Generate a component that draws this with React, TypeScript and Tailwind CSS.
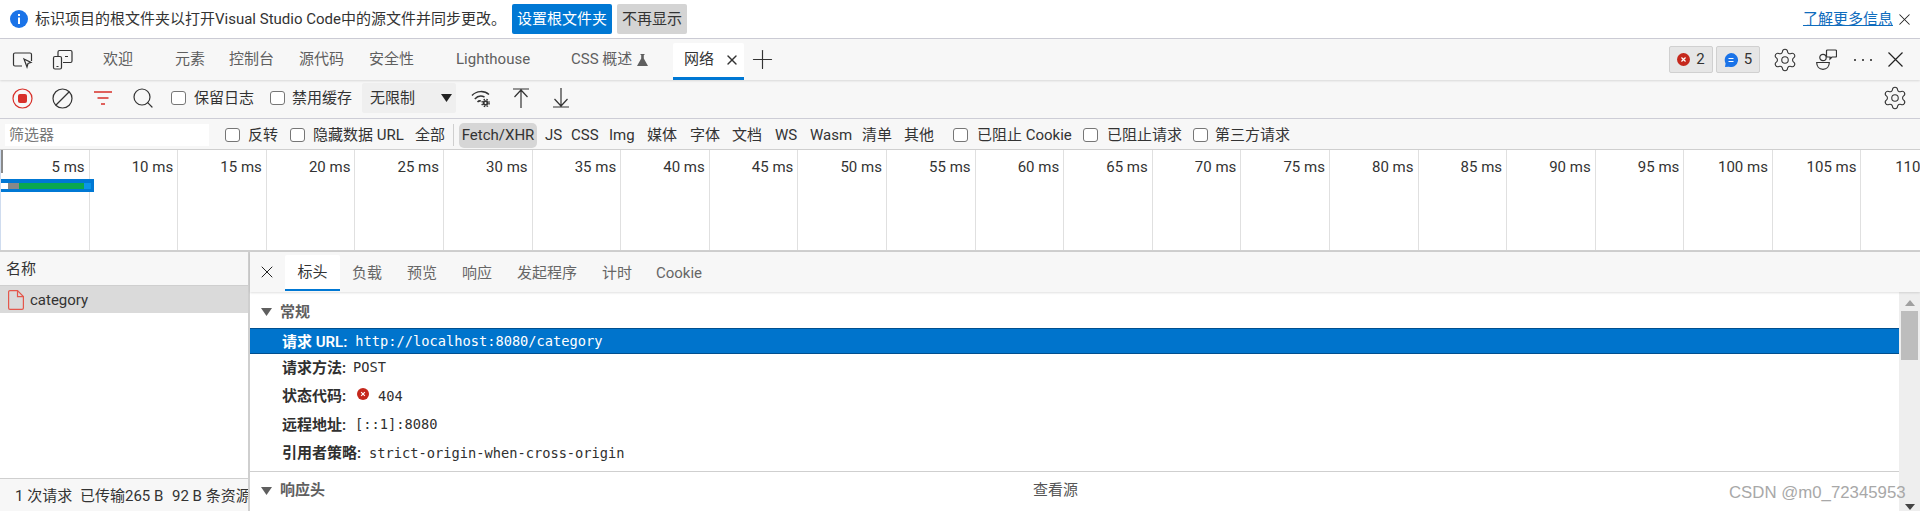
import { Search, Settings, X, Plus } from "lucide-react";

const FONT = "font-['Roboto','Noto_Sans_CJK_SC',sans-serif]";
const MONO = "font-['DejaVu_Sans_Mono','Noto_Sans_CJK_SC',monospace] text-[13.7px]";
const TIMES = [5, 10, 15, 20, 25, 30, 35, 40, 45, 50, 55, 60, 65, 70, 75, 80, 85, 90, 95, 100, 105, 110];

function Box({ className = "" }: { className?: string }) {
  return <span className={"shrink-0 w-[15px] h-[14px] rounded-[3px] border border-[#767676] bg-white " + className} />;
}

function T({ className = "", children }: { className?: string; children: React.ReactNode }) {
  return <span className={"shrink-0 whitespace-nowrap " + className}>{children}</span>;
}

function ErrorDot({ size = 14 }: { size?: number }) {
  return (
    <svg width={size} height={size} viewBox="0 0 14 14" className="shrink-0">
      <circle cx="7" cy="7" r="7" fill="#c5281c" />
      <path d="M4.8 4.8l4.4 4.4M9.2 4.8l-4.4 4.4" stroke="#fff" strokeWidth="1.3" />
    </svg>
  );
}

function Row({ name, children, className = "" }: { name: string; children: React.ReactNode; className?: string }) {
  return (
    <div className={"flex items-center h-[28.5px] pl-[32px] text-[#303030] " + className}>
      <span className="font-semibold whitespace-nowrap">{name}</span>
      {children}
    </div>
  );
}

export default function App() {
  return (
    <div className={"w-[1920px] h-[511px] overflow-hidden relative flex flex-col bg-white text-[15px] leading-none text-[#333] " + FONT}>
      {/* Notification */}
      <div className="h-[39px] shrink-0 flex items-center border-b border-[#cdcdd6] bg-white">
        <svg width="18" height="18" viewBox="0 0 18 18" className="ml-[10px] shrink-0">
          <circle cx="9" cy="9" r="9" fill="#1a73e8" />
          <rect x="8" y="7.5" width="2" height="6.5" fill="#fff" />
          <rect x="8" y="4" width="2" height="2" fill="#fff" />
        </svg>
        <T className="ml-[7px] w-[463px]">标识项目的根文件夹以打开Visual Studio Code中的源文件并同步更改。</T>
        <button className="ml-[14px] w-[100px] h-[30px] rounded-[2px] bg-[#0078d4] text-white shrink-0">设置根文件夹</button>
        <button className="ml-[5px] w-[70px] h-[30px] rounded-[2px] bg-[#d4d4d4] text-[#333] shrink-0">不再显示</button>
        <T className="ml-auto text-[#0f6cbd] underline">了解更多信息</T>
        <X size={19} strokeWidth={1.3} className="ml-[2px] mr-[6px] shrink-0 text-[#222]" />
      </div>

      {/* Tabs */}
      <div className="h-[41px] shrink-0 flex items-center bg-[#f7f7f7] text-[#5f5f5f] shadow-[0_1px_2px_rgba(0,0,0,0.12)] relative">
        <svg width="21" height="21" viewBox="0 0 21 21" fill="none" stroke="#333" strokeWidth="1.2" className="ml-[12px] shrink-0">
          <path d="M10 17H3a1.500 1.500 0 0 1-1.500-1.500v-10A1.500 1.500 0 0 1 3 4h15a1.500 1.500 0 0 1 1.500 1.500V12" />
          <path d="M12 10l7 3.500-3 1-1 3.500z" />
        </svg>
        <svg width="21" height="21" viewBox="0 0 21 21" fill="none" stroke="#333" strokeWidth="1.2" className="ml-[19px] shrink-0">
          <path d="M6 7V3a1.500 1.500 0 0 1 1.500-1.500h11A1.500 1.500 0 0 1 20 3v9a1.500 1.500 0 0 1-1.500 1.500H11" />
          <rect x="1.500" y="7.500" width="8" height="12.500" rx="1.500" />
          <path d="M13 7.500h3M4.500 17.500h2" />
        </svg>
        <T className="ml-[30px] w-[30px]">欢迎</T>
        <T className="ml-[42px] w-[29px]">元素</T>
        <T className="ml-[25px] w-[45px]">控制台</T>
        <T className="ml-[25px] w-[45px]">源代码</T>
        <T className="ml-[25px] w-[45px]">安全性</T>
        <T className="ml-[42px] w-[73px]">Lighthouse</T>
        <T className="ml-[42px] w-[60px]">CSS 概述</T>
        <svg width="11" height="12" viewBox="0 0 11 12" className="ml-[6px] shrink-0">
          <path d="M3.500 0h4v1h-.7v3.500L11 12H0l4.200-7.500V1h-.7z" fill="#5f5f5f" />
        </svg>
        <div className="ml-[25px] w-[71px] h-[37px] mt-[3px] shrink-0 flex items-center bg-white border-b-[3px] border-[#0078d4] rounded-t-[2px] text-[#333]">
          <T className="ml-[11px] w-[31px]">网络</T>
          <X size={16} strokeWidth={2} className="ml-[9px] shrink-0" />
        </div>
        <Plus size={31} strokeWidth={0.9} className="ml-[3px] shrink-0 text-[#333]" />
        <div className="ml-auto w-[44px] h-[27px] shrink-0 flex items-center justify-center gap-[6px] rounded-[2px] bg-[#e6e6e6] border border-[#d0d0d0] text-[#333]">
          <ErrorDot size={13} />
          <span>2</span>
        </div>
        <div className="ml-[3px] w-[44px] h-[27px] shrink-0 flex items-center justify-center gap-[6px] rounded-[2px] bg-[#e6e6e6] border border-[#d0d0d0] text-[#333]">
          <svg width="14" height="14" viewBox="0 0 14 14" className="shrink-0">
            <path d="M7 0a7 7 0 1 1-2 13.700L1 14l.6-3.600A7 7 0 0 1 7 0z" fill="#1a73e8" />
            <path d="M4.500 5.500h5M4.500 8.500h5" stroke="#fff" strokeWidth="1.100" />
          </svg>
          <span>5</span>
        </div>
        <Settings size={26} strokeWidth={1} className="ml-[12px] shrink-0 text-[#333]" />
        <svg width="21" height="21" viewBox="0 0 21 21" fill="none" stroke="#333" strokeWidth="1.200" className="ml-[18px] shrink-0">
          <circle cx="7" cy="8.500" r="3.200" />
          <path d="M.7 13.500h12.600c0 4-2.500 6.800-6.300 6.800S.7 17.500.7 13.500z" />
          <path d="M11.500 1h8a1 1 0 0 1 1 1v5a1 1 0 0 1-1 1h-3.500L14 10V8h-2.500a1 1 0 0 1-1-1V2a1 1 0 0 1 1-1z" />
        </svg>
        <div className="ml-[17px] w-[18px] shrink-0 flex justify-between">
          <span className="w-[2px] h-[2px] bg-[#222] rounded-full" />
          <span className="w-[2px] h-[2px] bg-[#222] rounded-full" />
          <span className="w-[2px] h-[2px] bg-[#222] rounded-full" />
        </div>
        <svg width="15" height="15" viewBox="0 0 15 15" fill="none" stroke="#222" strokeWidth="1.200" className="ml-[16px] mr-[17px] shrink-0">
          <path d="M.5.5l14 14M14.500.5l-14 14" />
        </svg>
      </div>

      {/* Network toolbar */}
      <div className="h-[39px] pb-[2px] shrink-0 flex items-center bg-[#f7f7f7] border-b border-[#cdcdd6]">
        <svg width="21" height="21" viewBox="0 0 21 21" fill="none" className="ml-[12px] shrink-0">
          <circle cx="10.500" cy="10.500" r="9.500" stroke="#d8302a" strokeWidth="1.200" />
          <rect x="6" y="6" width="9" height="9" rx="2" fill="#d8302a" />
        </svg>
        <svg width="21" height="21" viewBox="0 0 21 21" fill="none" stroke="#333" strokeWidth="1.200" className="ml-[19px] shrink-0">
          <circle cx="10.500" cy="10.500" r="9.500" />
          <path d="M4 17L17 4" />
        </svg>
        <svg width="20" height="14" viewBox="0 0 20 14" fill="none" stroke="#d8302a" strokeWidth="1.300" className="ml-[20px] shrink-0">
          <path d="M1 1h18M4.500 7h11M8 13h4" />
        </svg>
        <Search size={24} strokeWidth={1.2} className="ml-[18px] shrink-0 text-[#333]" />
        <Box className="ml-[16px]" />
        <T className="ml-[8px] w-[59px]">保留日志</T>
        <Box className="ml-[17px]" />
        <T className="ml-[7px] w-[60px]">禁用缓存</T>
        <div className="ml-[10px] w-[94px] h-[30px] shrink-0 flex items-center justify-between pl-[8px] pr-[4px] bg-[#efefef] rounded-[2px]">
          <span>无限制</span>
          <svg width="11" height="8" viewBox="0 0 11 8" className="mt-[-1px]">
            <path d="M0 0h11L5.500 8z" fill="#222" />
          </svg>
        </div>
        <svg width="20" height="20" viewBox="0 0 20 20" fill="none" stroke="#333" strokeWidth="1.500" className="ml-[15px] shrink-0">
          <path d="M1 7.500C5.500 2.500 13.500 2.500 18 6.500M3.800 11C6.500 8 10.500 7.500 13.500 9M6.500 14c1-1 2.200-1.300 3.300-1" />
          <circle cx="14.500" cy="15" r="2.800" fill="#333" stroke="none" />
          <circle cx="14.500" cy="15" r="3.600" stroke="#333" strokeWidth="1.400" strokeDasharray="1.500 1.400" />
          <circle cx="14.500" cy="15" r="1" fill="#f7f7f7" stroke="none" />
        </svg>
        <svg width="16" height="20" viewBox="0 0 16 20" fill="none" stroke="#333" strokeWidth="1.200" className="ml-[22px] shrink-0">
          <path d="M0 1h16M8 20V2M1.500 9L8 2l6.500 7" />
        </svg>
        <svg width="16" height="20" viewBox="0 0 16 20" fill="none" stroke="#333" strokeWidth="1.200" className="ml-[24px] shrink-0">
          <path d="M0 19h16M8 0v18M1.500 11L8 18l6.500-7" />
        </svg>
        <Settings size={26} strokeWidth={1} className="ml-auto mr-[12px] shrink-0 text-[#333]" />
      </div>

      {/* Filter bar */}
      <div className="h-[31px] pt-[2px] shrink-0 flex items-center bg-[#f7f7f7] border-b border-[#cfcfcf]">
        <div className="ml-[5px] w-[204px] h-[22px] shrink-0 flex items-center pl-[4px] bg-white text-[#777]">筛选器</div>
        <Box className="ml-[16px]" />
        <T className="ml-[8px] w-[30px]">反转</T>
        <Box className="ml-[12px]" />
        <T className="ml-[8px] w-[90px]">隐藏数据 URL</T>
        <T className="ml-[12px] w-[29px]">全部</T>
        <span className="ml-[9px] w-px h-[22px] shrink-0 bg-[#cfcfcf]" />
        <div className="ml-[5px] w-[78px] h-[25px] shrink-0 flex items-center justify-center rounded-[5px] bg-[#d6d6d6]">Fetch/XHR</div>
        <T className="ml-[8px] w-[13px]">JS</T>
        <T className="ml-[13px] w-[25px]">CSS</T>
        <T className="ml-[13px] w-[25px]">Img</T>
        <T className="ml-[13px] w-[31px]">媒体</T>
        <T className="ml-[12px] w-[30px]">字体</T>
        <T className="ml-[12px] w-[30px]">文档</T>
        <T className="ml-[13px] w-[21px]">WS</T>
        <T className="ml-[14px] w-[39px]">Wasm</T>
        <T className="ml-[13px] w-[30px]">清单</T>
        <T className="ml-[12px] w-[31px]">其他</T>
        <Box className="ml-[18px]" />
        <T className="ml-[9px] w-[94px]">已阻止 Cookie</T>
        <Box className="ml-[12px]" />
        <T className="ml-[9px] w-[74px]">已阻止请求</T>
        <Box className="ml-[12px]" />
        <T className="ml-[7px]">第三方请求</T>
      </div>

      {/* Timeline overview */}
      <div className="h-[100px] shrink-0 flex overflow-hidden relative bg-white border-l border-[#cfdcef]">
        {TIMES.map((t) => (
          <div key={t} className="w-[88.6px] h-full shrink-0 border-r border-[#e0e0e0] text-right pt-[10px] pr-[4px] whitespace-nowrap">
            {t} ms
          </div>
        ))}
        <div className="absolute left-[-1px] top-0 w-[3px] h-[23px] bg-[#8a8a8a]" />
        <div className="absolute left-[-1px] top-[29px] w-[94px] h-[13px] bg-[#0078d4] flex items-center pr-[3px]">
          <div className="w-[8px] h-[6px] bg-white" />
          <div className="w-[11px] h-[6px] bg-[#888]" />
          <div className="w-[65px] h-[6px] bg-[#0aa84f]" />
          <div className="w-[7px] h-[6px] bg-[#0a95e8]" />
        </div>
      </div>

      {/* Requests + details */}
      <div className="flex-1 min-h-0 flex border-t-2 border-[#cfcfcf]">
        <div className="w-[250px] shrink-0 flex flex-col border-r-2 border-[#cfcfcf] overflow-hidden">
          <div className="h-[34px] pt-[2px] shrink-0 flex items-center pl-[6px] bg-[#f7f7f7] border-b border-[#cfcfcf]">名称</div>
          <div className="h-[27px] pt-[2px] shrink-0 flex items-center pl-[8px] bg-[#dadada]">
            <svg width="16" height="20" viewBox="0 0 16 20" fill="none" stroke="#e4574c" strokeWidth="1.200" className="shrink-0 mt-[-2px]">
              <path d="M2 .6h7.500L15.400 6.500V18a1.400 1.400 0 0 1-1.400 1.400H2A1.400 1.400 0 0 1 .6 18V2A1.400 1.400 0 0 1 2 .6z" />
              <path d="M9.500.6v6h5.900" />
            </svg>
            <span className="ml-[6px]">category</span>
          </div>
          <div className="flex-1" />
          <div className="h-[33px] pt-[2px] shrink-0 flex items-center pl-[15px] bg-[#f7f7f7] border-t border-[#cfcfcf] whitespace-nowrap">
            <T className="w-[65px]">1 次请求</T>
            <T className="w-[92px]">已传输265 B</T>
            <T>92 B 条资源</T>
          </div>
        </div>

        <div className="flex-1 min-w-0 flex flex-col">
          <div className="h-[40px] shrink-0 flex items-center bg-[#f7f7f7] text-[#666] shadow-[0_1px_2px_rgba(0,0,0,0.12)] relative">
            <X size={20} strokeWidth={1.2} className="ml-[7px] shrink-0 text-[#222]" />
            <div className="ml-[8px] w-[55px] h-[36px] mt-[1px] pt-[1px] shrink-0 flex items-center justify-center bg-white rounded-t-[2px] border-b-2 border-[#0078d4] text-[#333]">标头</div>
            <T className="ml-[12px] w-[30px] pt-[2px]">负载</T>
            <T className="ml-[25px] w-[30px] pt-[2px]">预览</T>
            <T className="ml-[25px] w-[30px] pt-[2px]">响应</T>
            <T className="ml-[25px] w-[61px] pt-[2px]">发起程序</T>
            <T className="ml-[24px] w-[30px] pt-[2px]">计时</T>
            <T className="ml-[24px] pt-[2px]">Cookie</T>
          </div>

          <div className="flex-1 min-h-0 flex">
            <div className="flex-1 min-w-0 flex flex-col">
              <div className="h-[36px] shrink-0 flex items-center pl-[11px] pt-[4px] text-[#5f5f5f] font-semibold">
                <svg width="11" height="8" viewBox="0 0 11 8" className="shrink-0">
                  <path d="M0 0h11L5.500 8z" fill="#5f5f5f" />
                </svg>
                <span className="ml-[8px]">常规</span>
              </div>
              <div className="h-[26px] pt-[2px] shrink-0 flex items-center pl-[32px] bg-[#0074cc] border-y border-[#004f8f] text-white">
                <span className="font-semibold whitespace-nowrap">请求 URL:</span>
                <span className={"ml-[8px] " + MONO}>http://localhost:8080/category</span>
              </div>
              <Row name="请求方法:">
                <span className={"ml-[7px] " + MONO}>POST</span>
              </Row>
              <Row name="状态代码:">
                <span className="ml-[11px] mt-[-6px]"><ErrorDot size={12} /></span>
                <span className={"ml-[9px] " + MONO}>404</span>
              </Row>
              <Row name="远程地址:">
                <span className={"ml-[9px] " + MONO}>[::1]:8080</span>
              </Row>
              <Row name="引用者策略:">
                <span className={"ml-[8px] " + MONO}>strict-origin-when-cross-origin</span>
              </Row>
              <div className="mt-[3px] pb-[2px] flex-1 flex items-center relative pl-[11px] border-t border-[#cfcfcf] text-[#5f5f5f]">
                <svg width="11" height="8" viewBox="0 0 11 8" className="shrink-0">
                  <path d="M0 0h11L5.500 8z" fill="#5f5f5f" />
                </svg>
                <span className="ml-[8px] font-semibold">响应头</span>
                <span className="ml-[708px] text-[#555]">查看源</span>
              </div>
            </div>
            <div className="w-[21px] shrink-0 flex flex-col items-center bg-[#eeeeee]">
              <svg width="10" height="6" viewBox="0 0 10 6" className="mt-[8px] shrink-0">
                <path d="M0 6h10L5 0z" fill="#a0a0a0" />
              </svg>
              <div className="mt-[5px] w-[17px] h-[49px] shrink-0 bg-[#bdbdbd]" />
              <svg width="10" height="6" viewBox="0 0 10 6" className="mt-auto mb-[1px] shrink-0">
                <path d="M0 0h10L5 6z" fill="#444" />
              </svg>
            </div>
          </div>
        </div>
      </div>

      {/* Watermark */}
      <div className="absolute left-[1729px] top-[484px] font-['Liberation_Sans',sans-serif] text-[16.8px] leading-[18px] whitespace-nowrap text-[#a8a8a8]">
        CSDN @m0_72345953
      </div>
    </div>
  );
}
